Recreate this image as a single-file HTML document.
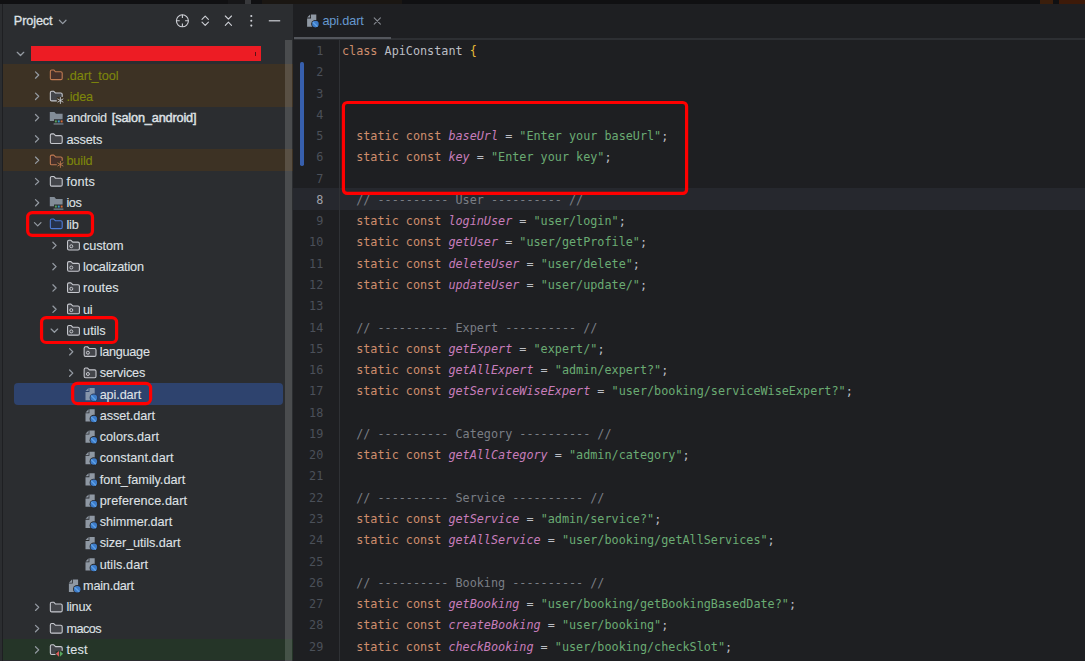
<!DOCTYPE html>
<html lang="en"><head><meta charset="utf-8"><title>api.dart</title>
<style>
html,body{margin:0;padding:0}
body{width:1085px;height:661px;overflow:hidden;position:relative;background:#2b2d30;font-family:"Liberation Sans",sans-serif;}
#topstrip{position:absolute;left:0;top:0;width:1085px;height:3.9px;background:#101012}
#topstrip i{position:absolute;top:0;height:3.9px}
#leftline{position:absolute;left:1.9px;top:4px;width:1.2px;height:657px;background:#1e1f22}
#panel{position:absolute;left:3px;top:4px;width:290px;height:657px;background:#2b2d30}
#editor{position:absolute;left:293px;top:4px;width:792px;height:657px;background:#1e1f22}
.rowbg{position:absolute;left:3.1px;width:289.9px}
.selrow{position:absolute;left:14px;width:268.5px;background:#2e436e;border-radius:4px}
.lab{position:absolute;height:21.29px;line-height:21.29px;font-size:12.7px;color:#dfe1e5;white-space:nowrap;-webkit-text-stroke:0.1px}
.lab.ex{color:#7f870b}
.mod{-webkit-text-stroke:0.45px #dfe1e5}
#ptitle{position:absolute;left:13.8px;top:11px;height:21.29px;line-height:21.29px;font-size:12.7px;color:#dfe1e5;-webkit-text-stroke:0.3px #dfe1e5;letter-spacing:-0.11px}
#scroll{position:absolute;left:285px;top:40px;width:7.3px;height:621px;background:rgba(255,255,255,0.15)}
#redbar{position:absolute;left:31px;top:46px;width:230px;height:14.9px;background:#ed1c24}
#redbar i{position:absolute;left:224px;top:5.5px;width:1px;height:4.5px;background:#5a1216}
#tabline{position:absolute;left:293.6px;top:38px;width:791.4px;height:1.9px;background:#2d2f33}
#tabsel{position:absolute;left:294px;top:36.85px;width:97.4px;height:2.65px;background:#54575d}
#tabname{position:absolute;left:322.4px;top:11px;height:21.29px;line-height:21.29px;font-size:12.7px;color:#6699cf;letter-spacing:-0.13px}
#curline{position:absolute;left:293px;top:188.2px;width:792px;height:21.5px;background:#26282e}
#gutline{position:absolute;left:338.8px;top:39.6px;width:1.2px;height:622px;background:#2f3135}
#bluebar{position:absolute;left:300.4px;top:61.6px;width:3.4px;height:104.5px;background:#375fad;border-radius:1.7px}
.ln{position:absolute;left:293px;width:30.3px;text-align:right;height:21.29px;line-height:21.29px;font-family:"DejaVu Sans Mono","Liberation Mono",monospace;font-size:11.79px;color:#4b5059}
.ln.cur{color:#a1a3ab}
.cl{position:absolute;left:342px;height:21.29px;line-height:21.29px;font-family:"DejaVu Sans Mono","Liberation Mono",monospace;font-size:11.79px;color:#bcbec4;white-space:pre}
.k{color:#cf8e6d} .f{color:#c77dbb;font-style:italic} .s{color:#6aab73} .c{color:#7a7e85} .br{color:#e8ba36}
svg{position:absolute;left:0;top:0}
</style></head>
<body>
<div id="topstrip"><i style="left:228px;width:17px;background:#161618"></i><i style="left:245px;width:5.5px;background:#38393c"></i><i style="left:262px;width:140px;background:#1a1612"></i><i style="left:1040px;width:12.5px;background:#3a1e0c"></i><i style="left:1058.5px;width:26.5px;background:#3d1a09"></i></div>
<div id="leftline"></div>
<div id="panel"></div>
<div id="editor"></div>
<div class="rowbg" style="top:64.09px;height:21.29px;background:#3d3224"></div>
<div class="rowbg" style="top:85.38px;height:21.29px;background:#3d3224"></div>
<div class="rowbg" style="top:149.25px;height:21.29px;background:#3d3224"></div>
<div class="selrow" style="top:383.44px;height:21.29px"></div>
<div class="rowbg" style="top:638.92px;height:21.29px;background:#253528"></div>
<div id="ptitle">Project</div>
<div id="scroll"></div>
<div id="redbar"><i></i></div>
<div id="tabline"></div><div id="tabsel"></div>
<div id="tabname">api.dart</div>
<div id="curline"></div>
<div id="gutline"></div>
<div id="bluebar"></div>
<svg width="1085" height="661" viewBox="0 0 1085 661">
<path d="M59.4 20.2 L62.7 23.6 L66 20.2" fill="none" stroke="#949aa2" stroke-width="1.25" stroke-linecap="round" stroke-linejoin="round"/>
<circle cx="182.4" cy="20.8" r="6" fill="none" stroke="#ced0d6" stroke-width="1.1"/>
<path d="M182.4 14.8 V18.1 M182.4 26.8 V23.5 M176.4 20.8 H179.70000000000002 M188.4 20.8 H185.1" stroke="#ced0d6" stroke-width="1.1" fill="none"/>
<path d="M202.0 19.3 L205.2 16.1 L208.39999999999998 19.3 M202.0 22.2 L205.2 25.4 L208.39999999999998 22.2" stroke="#ced0d6" stroke-width="1.1" fill="none" stroke-linecap="round" stroke-linejoin="round"/>
<path d="M225.3 16 L228.4 19.1 L231.5 16 M225.3 25.3 L228.4 22.2 L231.5 25.3" stroke="#ced0d6" stroke-width="1.1" fill="none" stroke-linecap="round" stroke-linejoin="round"/>
<circle cx="251.3" cy="16" r="1.05" fill="#ced0d6"/>
<circle cx="251.3" cy="20.8" r="1.05" fill="#ced0d6"/>
<circle cx="251.3" cy="25.6" r="1.05" fill="#ced0d6"/>
<path d="M268.8 20.8 H280.2" stroke="#ced0d6" stroke-width="1.2" fill="none"/>
<path d="M311 14.4 H316.3 V26.7 H307.1 V18.4 H311 Z" fill="#8f98a3"/><path d="M307.1 17.5 L310.2 14.4 V17.5 Z" fill="#8f98a3"/><circle cx="315.4" cy="24.1" r="4.2" fill="#1b1c1f"/><circle cx="315.4" cy="24.1" r="3.3" fill="#3d7bc9"/><path d="M313.2 22.5 L317 26.3" stroke="#5fa2e6" stroke-width="1.4" stroke-linecap="round" fill="none"/>
<path d="M374.2 17.9 L380.4 24.1 M380.4 17.9 L374.2 24.1" stroke="#868a91" stroke-width="1.1" fill="none" stroke-linecap="round"/>
<path d="M17.25 52.29 L20.5 55.54 L23.75 52.29" fill="none" stroke="#949aa2" stroke-width="1.25" stroke-linecap="round" stroke-linejoin="round"/>
<path d="M35.5 71.88 L38.7 75.03 L35.5 78.19" fill="none" stroke="#949aa2" stroke-width="1.25" stroke-linecap="round" stroke-linejoin="round"/>
<path d="M50.35 71.39 Q50.35 69.98 51.75 69.98 L53.75 69.98 L55.55 71.78 L60.8 71.78 Q62.2 71.78 62.2 73.19 L62.2 78.23 Q62.2 79.64 60.8 79.64 L51.75 79.64 Q50.35 79.64 50.35 78.23 Z" fill="#45302a" stroke="#c07a52" stroke-width="1.1" stroke-linejoin="round"/>
<path d="M35.5 93.17 L38.7 96.32 L35.5 99.47" fill="none" stroke="#949aa2" stroke-width="1.25" stroke-linecap="round" stroke-linejoin="round"/>
<path d="M50.35 92.67 Q50.35 91.27 51.75 91.27 L53.75 91.27 L55.55 93.07 L60.8 93.07 Q62.2 93.07 62.2 94.47 L62.2 99.52 Q62.2 100.92 60.8 100.92 L51.75 100.92 Q50.35 100.92 50.35 99.52 Z" fill="#43454a" stroke="#c6c8ce" stroke-width="1.1" stroke-linejoin="round"/>
<rect x="56.8" y="96.92" width="7.6" height="7.6" fill="#3d3224"/><path d="M60.4 97.52 V103.52 M57.8 99.02 L63 102.02 M57.8 102.02 L63 99.02" stroke="#ced0d6" stroke-width="0.85" fill="none" stroke-linecap="round"/>
<path d="M35.5 114.46 L38.7 117.61 L35.5 120.76" fill="none" stroke="#949aa2" stroke-width="1.25" stroke-linecap="round" stroke-linejoin="round"/>
<path d="M49.8 111.91 H54.4 L56 113.81 H62.6 V119.21 H54 V121.11 H49.8 Z" fill="#828c97"/><rect x="54.9" y="120.41" width="1.9" height="2" fill="#55a35b"/><rect x="57.8" y="120.41" width="1.9" height="2" fill="#3597c9"/><rect x="60.7" y="120.41" width="1.9" height="2" fill="#d96a36"/><rect x="53.6" y="123.41" width="9.8" height="1.1" fill="#828c97"/>
<path d="M35.5 135.75 L38.7 138.91 L35.5 142.06" fill="none" stroke="#949aa2" stroke-width="1.25" stroke-linecap="round" stroke-linejoin="round"/>
<path d="M50.35 135.25 Q50.35 133.85 51.75 133.85 L53.75 133.85 L55.55 135.66 L60.8 135.66 Q62.2 135.66 62.2 137.05 L62.2 142.1 Q62.2 143.5 60.8 143.5 L51.75 143.5 Q50.35 143.5 50.35 142.1 Z" fill="#43454a" stroke="#c6c8ce" stroke-width="1.1" stroke-linejoin="round"/>
<path d="M35.5 157.05 L38.7 160.2 L35.5 163.35" fill="none" stroke="#949aa2" stroke-width="1.25" stroke-linecap="round" stroke-linejoin="round"/>
<path d="M50.35 156.55 Q50.35 155.15 51.75 155.15 L53.75 155.15 L55.55 156.95 L60.8 156.95 Q62.2 156.95 62.2 158.34 L62.2 163.4 Q62.2 164.8 60.8 164.8 L51.75 164.8 Q50.35 164.8 50.35 163.4 Z" fill="#45302a" stroke="#c07a52" stroke-width="1.1" stroke-linejoin="round"/>
<rect x="56.8" y="160.8" width="7.6" height="7.6" fill="#3d3224"/><path d="M60.4 161.4 V167.4 M57.8 162.9 L63 165.9 M57.8 165.9 L63 162.9" stroke="#c07a52" stroke-width="0.85" fill="none" stroke-linecap="round"/>
<path d="M35.5 178.34 L38.7 181.49 L35.5 184.64" fill="none" stroke="#949aa2" stroke-width="1.25" stroke-linecap="round" stroke-linejoin="round"/>
<path d="M50.35 177.84 Q50.35 176.44 51.75 176.44 L53.75 176.44 L55.55 178.24 L60.8 178.24 Q62.2 178.24 62.2 179.63 L62.2 184.69 Q62.2 186.09 60.8 186.09 L51.75 186.09 Q50.35 186.09 50.35 184.69 Z" fill="#43454a" stroke="#c6c8ce" stroke-width="1.1" stroke-linejoin="round"/>
<path d="M35.5 199.62 L38.7 202.78 L35.5 205.93" fill="none" stroke="#949aa2" stroke-width="1.25" stroke-linecap="round" stroke-linejoin="round"/>
<path d="M49.8 197.07 H54.4 L56 198.97 H62.6 V204.38 H54 V206.27 H49.8 Z" fill="#828c97"/><rect x="54.9" y="205.57" width="1.9" height="2" fill="#55a35b"/><rect x="57.8" y="205.57" width="1.9" height="2" fill="#3597c9"/><rect x="60.7" y="205.57" width="1.9" height="2" fill="#d96a36"/><rect x="53.6" y="208.57" width="9.8" height="1.1" fill="#828c97"/>
<path d="M34.45 222.62 L37.7 225.87 L40.95 222.62" fill="none" stroke="#949aa2" stroke-width="1.25" stroke-linecap="round" stroke-linejoin="round"/>
<path d="M50.35 220.42 Q50.35 219.02 51.75 219.02 L53.75 219.02 L55.55 220.82 L60.8 220.82 Q62.2 220.82 62.2 222.22 L62.2 227.27 Q62.2 228.67 60.8 228.67 L51.75 228.67 Q50.35 228.67 50.35 227.27 Z" fill="#26324b" stroke="#4d7bd6" stroke-width="1.1" stroke-linejoin="round"/>
<path d="M52.9 242.2 L56.1 245.35 L52.9 248.5" fill="none" stroke="#949aa2" stroke-width="1.25" stroke-linecap="round" stroke-linejoin="round"/>
<path d="M67.55 241.7 Q67.55 240.3 68.95 240.3 L70.95 240.3 L72.75 242.1 L78 242.1 Q79.4 242.1 79.4 243.5 L79.4 248.55 Q79.4 249.95 78 249.95 L68.95 249.95 Q67.55 249.95 67.55 248.55 Z" fill="#43454a" stroke="#c6c8ce" stroke-width="1.1" stroke-linejoin="round"/><circle cx="71.3" cy="246.25" r="1.5" fill="none" stroke="#c6c8ce" stroke-width="1"/>
<path d="M52.9 263.5 L56.1 266.64 L52.9 269.79" fill="none" stroke="#949aa2" stroke-width="1.25" stroke-linecap="round" stroke-linejoin="round"/>
<path d="M67.55 262.99 Q67.55 261.59 68.95 261.59 L70.95 261.59 L72.75 263.39 L78 263.39 Q79.4 263.39 79.4 264.79 L79.4 269.84 Q79.4 271.24 78 271.24 L68.95 271.24 Q67.55 271.24 67.55 269.84 Z" fill="#43454a" stroke="#c6c8ce" stroke-width="1.1" stroke-linejoin="round"/><circle cx="71.3" cy="267.54" r="1.5" fill="none" stroke="#c6c8ce" stroke-width="1"/>
<path d="M52.9 284.79 L56.1 287.94 L52.9 291.08" fill="none" stroke="#949aa2" stroke-width="1.25" stroke-linecap="round" stroke-linejoin="round"/>
<path d="M67.55 284.28 Q67.55 282.88 68.95 282.88 L70.95 282.88 L72.75 284.69 L78 284.69 Q79.4 284.69 79.4 286.08 L79.4 291.13 Q79.4 292.53 78 292.53 L68.95 292.53 Q67.55 292.53 67.55 291.13 Z" fill="#43454a" stroke="#c6c8ce" stroke-width="1.1" stroke-linejoin="round"/><circle cx="71.3" cy="288.83" r="1.5" fill="none" stroke="#c6c8ce" stroke-width="1"/>
<path d="M52.9 306.07 L56.1 309.22 L52.9 312.37" fill="none" stroke="#949aa2" stroke-width="1.25" stroke-linecap="round" stroke-linejoin="round"/>
<path d="M67.55 305.57 Q67.55 304.17 68.95 304.17 L70.95 304.17 L72.75 305.97 L78 305.97 Q79.4 305.97 79.4 307.37 L79.4 312.42 Q79.4 313.82 78 313.82 L68.95 313.82 Q67.55 313.82 67.55 312.42 Z" fill="#43454a" stroke="#c6c8ce" stroke-width="1.1" stroke-linejoin="round"/><circle cx="71.3" cy="310.12" r="1.5" fill="none" stroke="#c6c8ce" stroke-width="1"/>
<path d="M51.15 329.06 L54.4 332.31 L57.65 329.06" fill="none" stroke="#949aa2" stroke-width="1.25" stroke-linecap="round" stroke-linejoin="round"/>
<path d="M67.55 326.86 Q67.55 325.46 68.95 325.46 L70.95 325.46 L72.75 327.26 L78 327.26 Q79.4 327.26 79.4 328.66 L79.4 333.71 Q79.4 335.11 78 335.11 L68.95 335.11 Q67.55 335.11 67.55 333.71 Z" fill="#43454a" stroke="#c6c8ce" stroke-width="1.1" stroke-linejoin="round"/><circle cx="71.3" cy="331.41" r="1.5" fill="none" stroke="#c6c8ce" stroke-width="1"/>
<path d="M69.6 348.66 L72.8 351.81 L69.6 354.95" fill="none" stroke="#949aa2" stroke-width="1.25" stroke-linecap="round" stroke-linejoin="round"/>
<path d="M84.15 348.15 Q84.15 346.75 85.55 346.75 L87.55 346.75 L89.35 348.56 L94.6 348.56 Q96 348.56 96 349.95 L96 355 Q96 356.4 94.6 356.4 L85.55 356.4 Q84.15 356.4 84.15 355 Z" fill="#43454a" stroke="#c6c8ce" stroke-width="1.1" stroke-linejoin="round"/><circle cx="87.9" cy="352.7" r="1.5" fill="none" stroke="#c6c8ce" stroke-width="1"/>
<path d="M69.6 369.94 L72.8 373.09 L69.6 376.24" fill="none" stroke="#949aa2" stroke-width="1.25" stroke-linecap="round" stroke-linejoin="round"/>
<path d="M84.15 369.44 Q84.15 368.04 85.55 368.04 L87.55 368.04 L89.35 369.84 L94.6 369.84 Q96 369.84 96 371.24 L96 376.29 Q96 377.69 94.6 377.69 L85.55 377.69 Q84.15 377.69 84.15 376.29 Z" fill="#43454a" stroke="#c6c8ce" stroke-width="1.1" stroke-linejoin="round"/><circle cx="87.9" cy="373.99" r="1.5" fill="none" stroke="#c6c8ce" stroke-width="1"/>
<path d="M89.4 387.98 H94.7 V400.28 H85.5 V391.98 H89.4 Z" fill="#8795ab"/><path d="M85.5 391.08 L88.6 387.98 V391.08 Z" fill="#8795ab"/><circle cx="93.8" cy="397.68" r="4.2" fill="#293c63"/><circle cx="93.8" cy="397.68" r="3.3" fill="#3d7bc9"/><path d="M91.6 396.08 L95.4 399.88" stroke="#5fa2e6" stroke-width="1.4" stroke-linecap="round" fill="none"/>
<path d="M89.4 409.27 H94.7 V421.57 H85.5 V413.27 H89.4 Z" fill="#8f98a3"/><path d="M85.5 412.38 L88.6 409.27 V412.38 Z" fill="#8f98a3"/><circle cx="93.8" cy="418.97" r="4.2" fill="#27292c"/><circle cx="93.8" cy="418.97" r="3.3" fill="#3d7bc9"/><path d="M91.6 417.38 L95.4 421.17" stroke="#5fa2e6" stroke-width="1.4" stroke-linecap="round" fill="none"/>
<path d="M89.4 430.56 H94.7 V442.86 H85.5 V434.56 H89.4 Z" fill="#8f98a3"/><path d="M85.5 433.66 L88.6 430.56 V433.66 Z" fill="#8f98a3"/><circle cx="93.8" cy="440.26" r="4.2" fill="#27292c"/><circle cx="93.8" cy="440.26" r="3.3" fill="#3d7bc9"/><path d="M91.6 438.66 L95.4 442.46" stroke="#5fa2e6" stroke-width="1.4" stroke-linecap="round" fill="none"/>
<path d="M89.4 451.85 H94.7 V464.15 H85.5 V455.85 H89.4 Z" fill="#8f98a3"/><path d="M85.5 454.95 L88.6 451.85 V454.95 Z" fill="#8f98a3"/><circle cx="93.8" cy="461.55" r="4.2" fill="#27292c"/><circle cx="93.8" cy="461.55" r="3.3" fill="#3d7bc9"/><path d="M91.6 459.95 L95.4 463.75" stroke="#5fa2e6" stroke-width="1.4" stroke-linecap="round" fill="none"/>
<path d="M89.4 473.14 H94.7 V485.44 H85.5 V477.14 H89.4 Z" fill="#8f98a3"/><path d="M85.5 476.24 L88.6 473.14 V476.24 Z" fill="#8f98a3"/><circle cx="93.8" cy="482.84" r="4.2" fill="#27292c"/><circle cx="93.8" cy="482.84" r="3.3" fill="#3d7bc9"/><path d="M91.6 481.24 L95.4 485.04" stroke="#5fa2e6" stroke-width="1.4" stroke-linecap="round" fill="none"/>
<path d="M89.4 494.43 H94.7 V506.73 H85.5 V498.43 H89.4 Z" fill="#8f98a3"/><path d="M85.5 497.53 L88.6 494.43 V497.53 Z" fill="#8f98a3"/><circle cx="93.8" cy="504.13" r="4.2" fill="#27292c"/><circle cx="93.8" cy="504.13" r="3.3" fill="#3d7bc9"/><path d="M91.6 502.53 L95.4 506.33" stroke="#5fa2e6" stroke-width="1.4" stroke-linecap="round" fill="none"/>
<path d="M89.4 515.73 H94.7 V528.02 H85.5 V519.73 H89.4 Z" fill="#8f98a3"/><path d="M85.5 518.83 L88.6 515.73 V518.83 Z" fill="#8f98a3"/><circle cx="93.8" cy="525.43" r="4.2" fill="#27292c"/><circle cx="93.8" cy="525.43" r="3.3" fill="#3d7bc9"/><path d="M91.6 523.83 L95.4 527.62" stroke="#5fa2e6" stroke-width="1.4" stroke-linecap="round" fill="none"/>
<path d="M89.4 537.01 H94.7 V549.31 H85.5 V541.01 H89.4 Z" fill="#8f98a3"/><path d="M85.5 540.11 L88.6 537.01 V540.11 Z" fill="#8f98a3"/><circle cx="93.8" cy="546.71" r="4.2" fill="#27292c"/><circle cx="93.8" cy="546.71" r="3.3" fill="#3d7bc9"/><path d="M91.6 545.11 L95.4 548.91" stroke="#5fa2e6" stroke-width="1.4" stroke-linecap="round" fill="none"/>
<path d="M89.4 558.3 H94.7 V570.6 H85.5 V562.3 H89.4 Z" fill="#8f98a3"/><path d="M85.5 561.4 L88.6 558.3 V561.4 Z" fill="#8f98a3"/><circle cx="93.8" cy="568" r="4.2" fill="#27292c"/><circle cx="93.8" cy="568" r="3.3" fill="#3d7bc9"/><path d="M91.6 566.4 L95.4 570.2" stroke="#5fa2e6" stroke-width="1.4" stroke-linecap="round" fill="none"/>
<path d="M72.8 579.59 H78.1 V591.89 H68.9 V583.59 H72.8 Z" fill="#8f98a3"/><path d="M68.9 582.69 L72 579.59 V582.69 Z" fill="#8f98a3"/><circle cx="77.2" cy="589.29" r="4.2" fill="#27292c"/><circle cx="77.2" cy="589.29" r="3.3" fill="#3d7bc9"/><path d="M75 587.69 L78.8 591.49" stroke="#5fa2e6" stroke-width="1.4" stroke-linecap="round" fill="none"/>
<path d="M35.5 604.13 L38.7 607.28 L35.5 610.43" fill="none" stroke="#949aa2" stroke-width="1.25" stroke-linecap="round" stroke-linejoin="round"/>
<path d="M50.35 603.63 Q50.35 602.23 51.75 602.23 L53.75 602.23 L55.55 604.03 L60.8 604.03 Q62.2 604.03 62.2 605.43 L62.2 610.48 Q62.2 611.88 60.8 611.88 L51.75 611.88 Q50.35 611.88 50.35 610.48 Z" fill="#43454a" stroke="#c6c8ce" stroke-width="1.1" stroke-linejoin="round"/>
<path d="M35.5 625.42 L38.7 628.57 L35.5 631.72" fill="none" stroke="#949aa2" stroke-width="1.25" stroke-linecap="round" stroke-linejoin="round"/>
<path d="M50.35 624.92 Q50.35 623.52 51.75 623.52 L53.75 623.52 L55.55 625.32 L60.8 625.32 Q62.2 625.32 62.2 626.72 L62.2 631.77 Q62.2 633.17 60.8 633.17 L51.75 633.17 Q50.35 633.17 50.35 631.77 Z" fill="#43454a" stroke="#c6c8ce" stroke-width="1.1" stroke-linejoin="round"/>
<path d="M35.5 646.71 L38.7 649.86 L35.5 653.01" fill="none" stroke="#949aa2" stroke-width="1.25" stroke-linecap="round" stroke-linejoin="round"/>
<path d="M50.35 646.21 Q50.35 644.81 51.75 644.81 L53.75 644.81 L55.55 646.61 L60.8 646.61 Q62.2 646.61 62.2 648.01 L62.2 653.06 Q62.2 654.46 60.8 654.46 L51.75 654.46 Q50.35 654.46 50.35 653.06 Z" fill="#43454a" stroke="#c6c8ce" stroke-width="1.1" stroke-linejoin="round"/>
<rect x="55.5" y="650.86" width="7.8" height="6.2" fill="#253528"/>
<path d="M55.8 653.86 L59 651.06 V656.66 Z" fill="#db5c5c"/>
<path d="M59.9 651.06 L63.1 653.86 L59.9 656.66 Z" fill="#57a65e"/>
</svg>
<div class="lab ex" style="left:66.4px;top:66px"><span id="lab1" style="letter-spacing:-0.08px">.dart_tool</span></div>
<div class="lab ex" style="left:66.4px;top:87px"><span id="lab2" style="letter-spacing:-0.2px">.idea</span></div>
<div class="lab " style="left:66.4px;top:108px"><span id="lab3" style="letter-spacing:-0.26px">android</span> <span class="mod" id="labmod" style="letter-spacing:-0.15px;margin-left:1.43px">[salon_android]</span></div>
<div class="lab " style="left:66.4px;top:130px"><span id="lab4" style="letter-spacing:-0.16px">assets</span></div>
<div class="lab ex" style="left:66.4px;top:151px"><span id="lab5" style="letter-spacing:-0.14px">build</span></div>
<div class="lab " style="left:66.4px;top:172px"><span id="lab6" style="letter-spacing:0.24px">fonts</span></div>
<div class="lab " style="left:66.4px;top:193px"><span id="lab7" style="letter-spacing:-0.37px">ios</span></div>
<div class="lab " style="left:66.4px;top:215px"><span id="lab8" style="letter-spacing:-0.2px">lib</span></div>
<div class="lab " style="left:83.1px;top:236px"><span id="lab9" style="letter-spacing:-0.08px">custom</span></div>
<div class="lab " style="left:83.1px;top:257px"><span id="lab10" style="letter-spacing:-0.17px">localization</span></div>
<div class="lab " style="left:83.1px;top:278px"><span id="lab11" style="letter-spacing:0.06px">routes</span></div>
<div class="lab " style="left:83.1px;top:300px"><span id="lab12" style="letter-spacing:-0.39px">ui</span></div>
<div class="lab " style="left:83.1px;top:321px"><span id="lab13" style="letter-spacing:0.01px">utils</span></div>
<div class="lab " style="left:99.7px;top:342px"><span id="lab14" style="letter-spacing:-0.28px">language</span></div>
<div class="lab " style="left:99.7px;top:363px"><span id="lab15" style="letter-spacing:-0.12px">services</span></div>
<div class="lab " style="left:99.7px;top:385px"><span id="lab16" style="letter-spacing:-0.12px">api.dart</span></div>
<div class="lab " style="left:99.7px;top:406px"><span id="lab17" style="letter-spacing:-0.04px">asset.dart</span></div>
<div class="lab " style="left:99.7px;top:427px"><span id="lab18" style="letter-spacing:-0px">colors.dart</span></div>
<div class="lab " style="left:99.7px;top:448px"><span id="lab19" style="letter-spacing:0.04px">constant.dart</span></div>
<div class="lab " style="left:99.7px;top:470px"><span id="lab20" style="letter-spacing:-0.02px">font_family.dart</span></div>
<div class="lab " style="left:99.7px;top:491px"><span id="lab21" style="letter-spacing:0.1px">preference.dart</span></div>
<div class="lab " style="left:99.7px;top:512px"><span id="lab22" style="letter-spacing:-0.07px">shimmer.dart</span></div>
<div class="lab " style="left:99.7px;top:533px"><span id="lab23" style="letter-spacing:-0.07px">sizer_utils.dart</span></div>
<div class="lab " style="left:99.7px;top:555px"><span id="lab24" style="letter-spacing:0.05px">utils.dart</span></div>
<div class="lab " style="left:83.1px;top:576px"><span id="lab25" style="letter-spacing:-0.24px">main.dart</span></div>
<div class="lab " style="left:66.4px;top:597px"><span id="lab26" style="letter-spacing:-0.22px">linux</span></div>
<div class="lab " style="left:66.4px;top:619px"><span id="lab27" style="letter-spacing:-0.56px">macos</span></div>
<div class="lab " style="left:66.4px;top:640px"><span id="lab28" style="letter-spacing:0.21px">test</span></div>
<div class="ln" style="top:41px">1</div>
<div class="ln" style="top:62px">2</div>
<div class="ln" style="top:84px">3</div>
<div class="ln" style="top:105px">4</div>
<div class="ln" style="top:126px">5</div>
<div class="ln" style="top:147px">6</div>
<div class="ln" style="top:169px">7</div>
<div class="ln cur" style="top:190px">8</div>
<div class="ln" style="top:211px">9</div>
<div class="ln" style="top:232px">10</div>
<div class="ln" style="top:254px">11</div>
<div class="ln" style="top:275px">12</div>
<div class="ln" style="top:296px">13</div>
<div class="ln" style="top:318px">14</div>
<div class="ln" style="top:339px">15</div>
<div class="ln" style="top:360px">16</div>
<div class="ln" style="top:381px">17</div>
<div class="ln" style="top:403px">18</div>
<div class="ln" style="top:424px">19</div>
<div class="ln" style="top:445px">20</div>
<div class="ln" style="top:466px">21</div>
<div class="ln" style="top:488px">22</div>
<div class="ln" style="top:509px">23</div>
<div class="ln" style="top:530px">24</div>
<div class="ln" style="top:552px">25</div>
<div class="ln" style="top:573px">26</div>
<div class="ln" style="top:594px">27</div>
<div class="ln" style="top:615px">28</div>
<div class="ln" style="top:637px">29</div>
<div class="cl" style="top:41px"><span class="k">class</span> ApiConstant <span class="br">{</span></div>
<div class="cl" style="top:126px">  <span class="k">static const</span> <span class="f">baseUrl</span> = <span class="s">"Enter your baseUrl"</span>;</div>
<div class="cl" style="top:147px">  <span class="k">static const</span> <span class="f">key</span> = <span class="s">"Enter your key"</span>;</div>
<div class="cl" style="top:190px">  <span class="c">// ---------- User ---------- //</span></div>
<div class="cl" style="top:211px">  <span class="k">static const</span> <span class="f">loginUser</span> = <span class="s">"user/login"</span>;</div>
<div class="cl" style="top:232px">  <span class="k">static const</span> <span class="f">getUser</span> = <span class="s">"user/getProfile"</span>;</div>
<div class="cl" style="top:254px">  <span class="k">static const</span> <span class="f">deleteUser</span> = <span class="s">"user/delete"</span>;</div>
<div class="cl" style="top:275px">  <span class="k">static const</span> <span class="f">updateUser</span> = <span class="s">"user/update/"</span>;</div>
<div class="cl" style="top:318px">  <span class="c">// ---------- Expert ---------- //</span></div>
<div class="cl" style="top:339px">  <span class="k">static const</span> <span class="f">getExpert</span> = <span class="s">"expert/"</span>;</div>
<div class="cl" style="top:360px">  <span class="k">static const</span> <span class="f">getAllExpert</span> = <span class="s">"admin/expert?"</span>;</div>
<div class="cl" style="top:381px">  <span class="k">static const</span> <span class="f">getServiceWiseExpert</span> = <span class="s">"user/booking/serviceWiseExpert?"</span>;</div>
<div class="cl" style="top:424px">  <span class="c">// ---------- Category ---------- //</span></div>
<div class="cl" style="top:445px">  <span class="k">static const</span> <span class="f">getAllCategory</span> = <span class="s">"admin/category"</span>;</div>
<div class="cl" style="top:488px">  <span class="c">// ---------- Service ---------- //</span></div>
<div class="cl" style="top:509px">  <span class="k">static const</span> <span class="f">getService</span> = <span class="s">"admin/service?"</span>;</div>
<div class="cl" style="top:530px">  <span class="k">static const</span> <span class="f">getAllService</span> = <span class="s">"user/booking/getAllServices"</span>;</div>
<div class="cl" style="top:573px">  <span class="c">// ---------- Booking ---------- //</span></div>
<div class="cl" style="top:594px">  <span class="k">static const</span> <span class="f">getBooking</span> = <span class="s">"user/booking/getBookingBasedDate?"</span>;</div>
<div class="cl" style="top:615px">  <span class="k">static const</span> <span class="f">createBooking</span> = <span class="s">"user/booking"</span>;</div>
<div class="cl" style="top:637px">  <span class="k">static const</span> <span class="f">checkBooking</span> = <span class="s">"user/booking/checkSlot"</span>;</div>
<svg width="1085" height="661" viewBox="0 0 1085 661">
<rect x="343.4" y="102.5" width="343.2" height="90.9" rx="3.8" fill="none" stroke="#ff0000" stroke-width="3.2"/>
<rect x="27.65" y="212.65" width="64.85" height="22.82" rx="4.6" fill="none" stroke="#ff0000" stroke-width="3.2"/>
<rect x="41.55" y="317.6" width="75.05" height="24.9" rx="4.6" fill="none" stroke="#ff0000" stroke-width="3.2"/>
<rect x="72.66" y="383.3" width="77.94" height="20.3" rx="4.8" fill="none" stroke="#ff0000" stroke-width="3.2"/>
</svg>
</body></html>
